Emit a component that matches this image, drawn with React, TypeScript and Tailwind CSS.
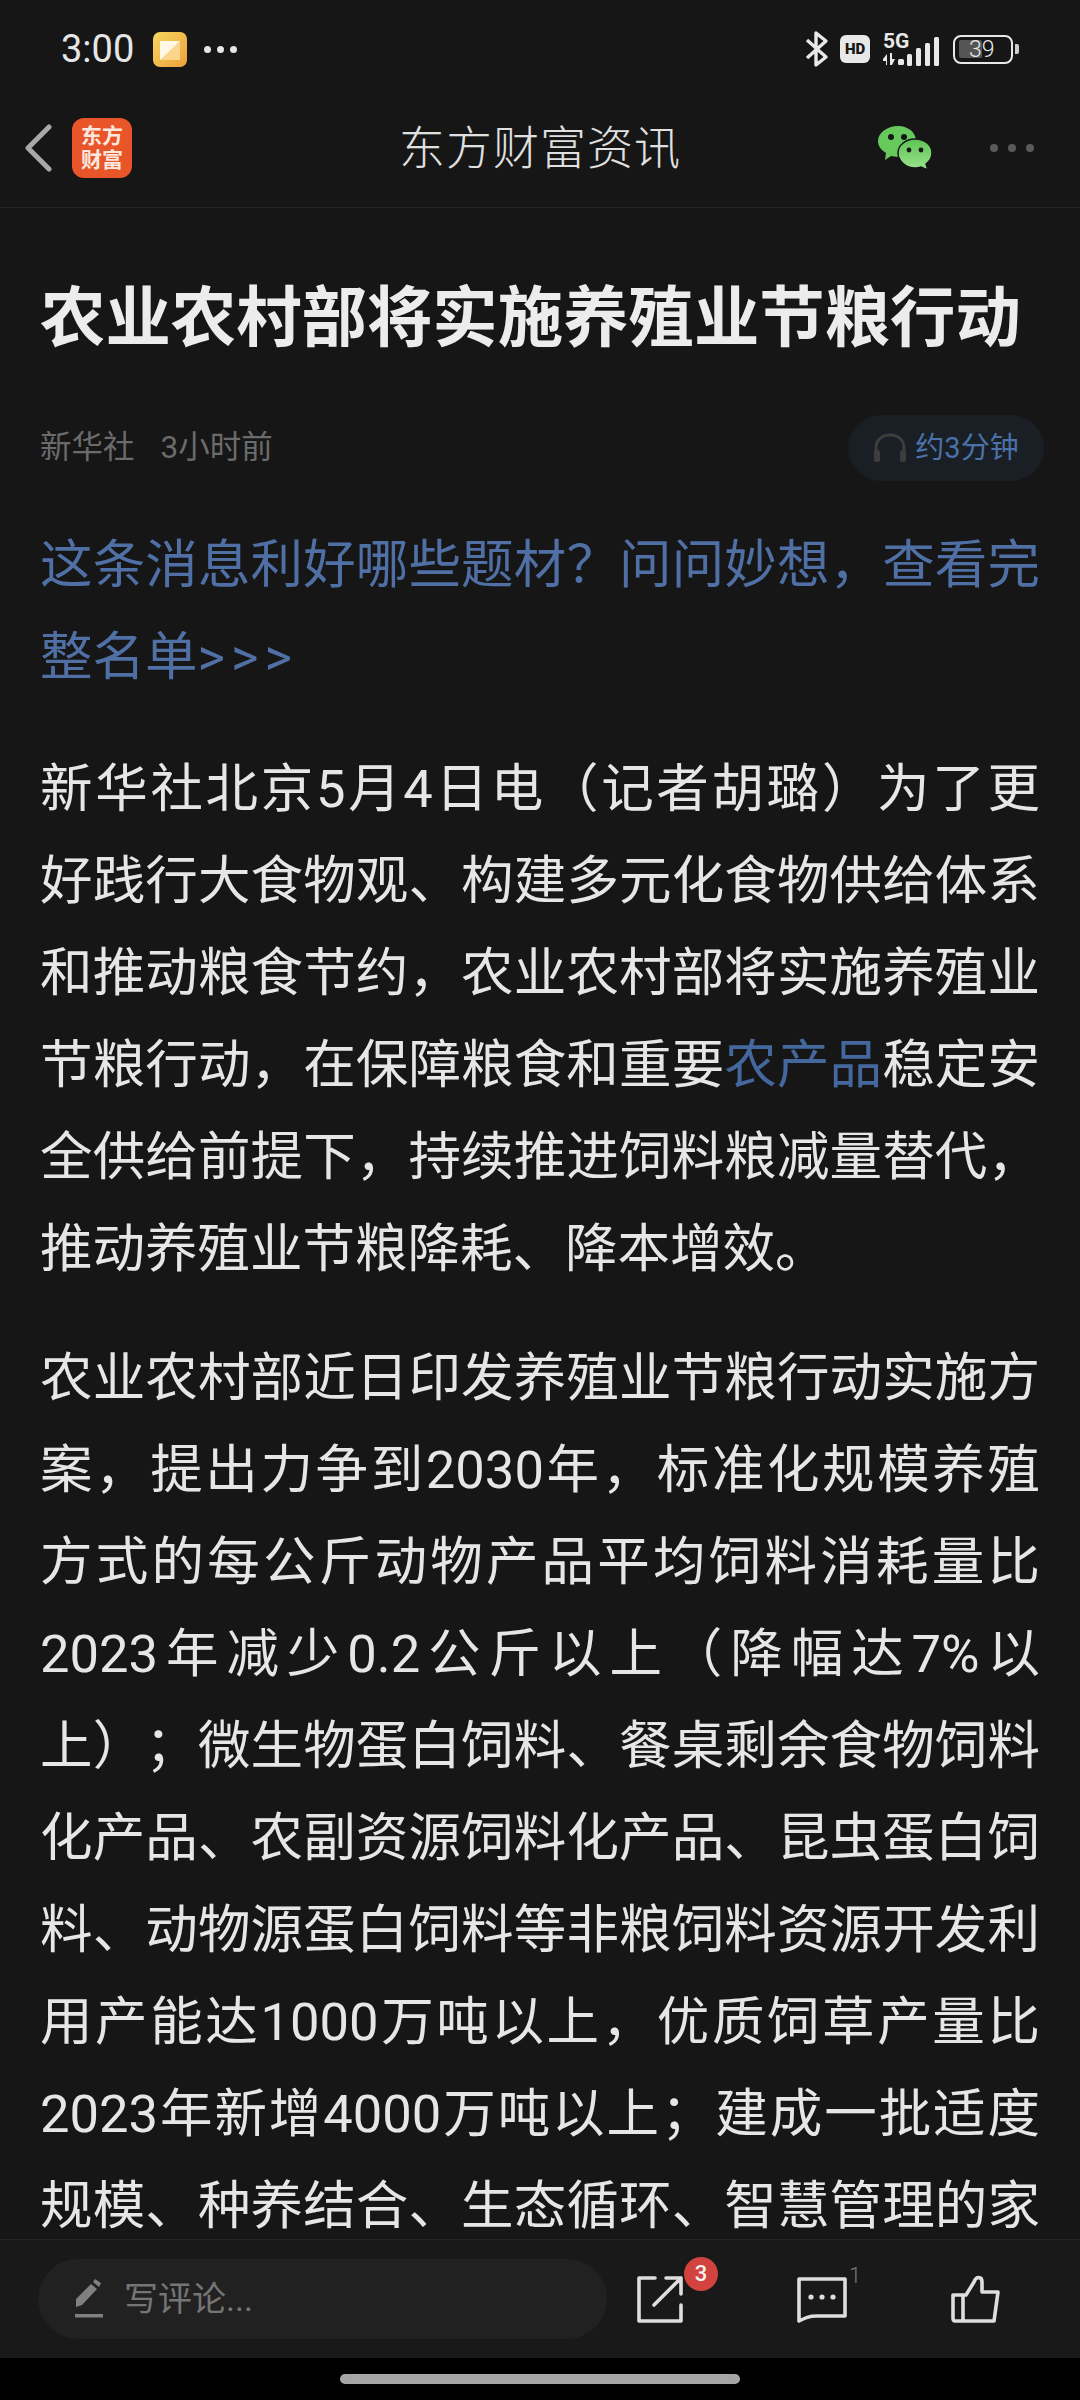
const sans = 'font-["Roboto","Noto_Sans_CJK_SC",sans-serif]'

const paragraphOne = [
    ['新华社北京5月4日电（记者胡璐）为了更'],
    ['好践行大食物观、构建多元化食物供给体系'],
    ['和推动粮食节约，农业农村部将实施养殖业'],
    ['节粮行动，在保障粮食和重要', '农产品', '稳定安'],
    ['全供给前提下，持续推进饲料粮减量替代，'],
]

const paragraphTwo = [
    '农业农村部近日印发养殖业节粮行动实施方',
    '案，提出力争到2030年，标准化规模养殖',
    '方式的每公斤动物产品平均饲料消耗量比',
    '2023年减少0.2公斤以上（降幅达7%以',
    '上）；微生物蛋白饲料、餐桌剩余食物饲料',
    '化产品、农副资源饲料化产品、昆虫蛋白饲',
    '料、动物源蛋白饲料等非粮饲料资源开发利',
    '用产能达1000万吨以上，优质饲草产量比',
    '2023年新增4000万吨以上；建成一批适度',
    '规模、种养结合、生态循环、智慧管理的家',
]

function StatusIcons() {
    return (
        <div className="flex items-center">
            <svg width="24" height="38" viewBox="0 0 24 38" fill="none" stroke="#e8e8e8" strokeWidth="3.4" strokeLinejoin="round">
                <path d="M2 10 L21 27 L11 35 V3 L21 11 L2 28" />
            </svg>
            <div className="ml-[11px] flex h-[28px] w-[30px] items-center justify-center rounded-[6px] bg-[#e8e8e8] text-[15px] leading-none font-black text-[#161616]">
                HD
            </div>
            <div className="relative ml-[12px] h-[34px] w-[57px]">
                <span className="absolute top-0 left-[1px] text-[21px] leading-[19px] font-bold text-[#e8e8e8]">5G</span>
                <svg width="57" height="34" viewBox="0 0 57 34" fill="#e8e8e8" className="block">
                    <path d="M1 27 L5 22 V33 H4 V29 H1 Z M8 21 H10 V27 H13 L10 33 H8 Z" />
                    <rect x="16" y="27" width="6" height="6" rx="1.5" />
                    <rect x="25" y="22" width="5" height="12" rx="1.5" />
                    <rect x="34" y="16" width="5" height="18" rx="1.5" />
                    <rect x="43" y="11" width="5" height="23" rx="1.5" />
                    <rect x="52" y="5" width="5" height="29" rx="1.5" />
                </svg>
            </div>
            <div className="ml-[14px] flex items-center gap-[2px]">
                <div className="relative flex h-[29px] w-[60px] items-center rounded-[8px] border-[2.5px] border-[#e8e8e8] px-[4px]">
                    <div className="h-[18px] w-[23px] rounded-[2px] bg-[#555555]" />
                    <span className="absolute left-[14px] text-[23px] leading-none font-light text-[#e8e8e8]">39</span>
                </div>
                <div className="h-[10px] w-[4px] rounded-r-[2px] bg-[#cccccc]" />
            </div>
        </div>
    )
}

function WeChatIcon() {
    return (
        <svg width="54" height="44" viewBox="0 0 54 44">
            <defs>
                <linearGradient id="wc" x1="0" y1="0" x2="0" y2="1">
                    <stop offset="0" stopColor="#5cc354" />
                    <stop offset="1" stopColor="#9be38c" />
                </linearGradient>
            </defs>
            <path d="M20 0 C31 0 38 7 38 15 C38 24 30 31 20 31 C17 31 15 30 13 30 L7 34 L8 27 C3 24 0 20 0 15 C0 7 9 0 20 0 Z" fill="#67c95c" />
            <path d="M37 13 C47 13 54 19 54 27 C54 32 52 35 48 38 L50 44 L43 41 C41 42 39 42 37 42 C28 42 20 35 20 27 C20 19 28 13 37 13 Z" fill="url(#wc)" stroke="#161616" strokeWidth="1.5" />
            <circle cx="13" cy="11" r="3" fill="#161616" />
            <circle cx="26" cy="11" r="3" fill="#161616" />
            <circle cx="31" cy="24" r="2.4" fill="#161616" />
            <circle cx="43" cy="24" r="2.4" fill="#161616" />
        </svg>
    )
}

function TextLine({ children, last }: { children: React.ReactNode; last?: boolean }) {
    return (
        <div
            className={
                last
                    ? 'h-[92px] whitespace-nowrap [text-spacing-trim:space-all]'
                    : 'h-[92px] whitespace-nowrap text-justify [text-align-last:justify] [text-spacing-trim:space-all]'
            }
        >
            {children}
        </div>
    )
}

export default function App() {
    return (
        <div className={`flex h-[2400px] w-[1080px] flex-col overflow-hidden bg-[#161616] ${sans}`}>
            {/* Status bar */}
            <div className="flex h-[98px] shrink-0 items-center justify-between pr-[61px] pl-[61px]">
                <div className="flex items-center">
                    <span className="text-[38px] leading-none text-[#e6e6e6]">3:00</span>
                    <svg width="34" height="35" viewBox="0 0 34 35" className="ml-[19px]">
                        <defs>
                            <linearGradient id="note" x1="0" y1="0" x2="1" y2="1">
                                <stop offset="0" stopColor="#f5d75f" />
                                <stop offset="1" stopColor="#eda03c" />
                            </linearGradient>
                        </defs>
                        <rect width="34" height="35" rx="7" fill="url(#note)" />
                        <rect x="7" y="9" width="20" height="19" fill="#f9d68c" />
                        <path d="M7 9 H27 L7 28 Z" fill="#fff9e3" />
                    </svg>
                    <div className="ml-[17px] flex gap-[6px]">
                        <div className="h-[7px] w-[7px] rounded-full bg-[#e6e6e6]" />
                        <div className="h-[7px] w-[7px] rounded-full bg-[#e6e6e6]" />
                        <div className="h-[7px] w-[7px] rounded-full bg-[#e6e6e6]" />
                    </div>
                </div>
                <StatusIcons />
            </div>

            {/* Nav */}
            <div className="grid h-[110px] shrink-0 grid-cols-[1fr_auto_1fr] items-center border-b border-[#262626] pb-[10px]">
                <div className="flex items-center pl-[24px]">
                    <svg width="28" height="48" viewBox="0 0 28 48" fill="none" stroke="#a8a8a8" strokeWidth="5" strokeLinecap="round" strokeLinejoin="round">
                        <path d="M25 3 L4 24 L25 45" />
                    </svg>
                    <div className="ml-[20px] flex h-[60px] w-[60px] flex-col items-center justify-center rounded-[12px] bg-[#e85528] font-['Liberation_Serif','Noto_Sans_CJK_SC',serif] text-[21px] leading-[24px] font-bold text-[#fbe9e0]">
                        <span>东方</span>
                        <span>财富</span>
                    </div>
                </div>
                <div className="text-[46px] leading-none font-light tracking-[1px] text-[#e0e0e0]">东方财富资讯</div>
                <div className="flex items-center justify-end pr-[46px]">
                    <WeChatIcon />
                    <div className="ml-[58px] flex gap-[10px]">
                        <div className="h-[8px] w-[8px] rounded-full bg-[#5a5a5a]" />
                        <div className="h-[8px] w-[8px] rounded-full bg-[#5a5a5a]" />
                        <div className="h-[8px] w-[8px] rounded-full bg-[#5a5a5a]" />
                    </div>
                </div>
            </div>

            {/* Article */}
            <div className="min-h-0 flex-1 overflow-hidden px-[40px]">
                <h1 className="mt-[73px] text-[65.4px] leading-[76px] font-bold whitespace-nowrap text-[#ececec]">
                    农业农村部将实施养殖业节粮行动
                </h1>

                <div className="mt-[58px] flex h-[66px] items-center justify-between">
                    <div className="text-[31.5px] leading-none text-[#6b6b6b]">
                        <span>新华社</span>
                        <span className="ml-[26px]">3小时前</span>
                    </div>
                    <div className="-mr-[4px] flex h-[66px] w-[196px] items-center justify-center gap-[8px] rounded-[33px] bg-[#1a1f26]">
                        <svg width="34" height="30" viewBox="0 0 34 30" fill="none" stroke="#3d3d3d" strokeWidth="3">
                            <path d="M3 26 V15 C3 7 9 2 17 2 C25 2 31 7 31 15 V26" />
                            <rect x="1" y="17" width="6" height="12" rx="2.5" fill="#3d3d3d" stroke="none" />
                            <rect x="27" y="17" width="6" height="12" rx="2.5" fill="#3d3d3d" stroke="none" />
                        </svg>
                        <span className="text-[29px] leading-none text-[#4a72a8]">约3分钟</span>
                    </div>
                </div>

                <div className="mt-[38px] text-[52.5px] leading-[92px] text-[#4f6fa5]">
                    <TextLine>这条消息利好哪些题材？问问妙想，查看完</TextLine>
                    <TextLine last>
                        整名单<span className="tracking-[6px]">&gt;&gt;&gt;</span>
                    </TextLine>
                </div>

                <div className="mt-[40px] text-[52.5px] leading-[92px] text-[#e6e6e6]">
                    {paragraphOne.map((parts, i) => (
                        <TextLine key={i}>
                            {parts.length === 3 ? (
                                <>
                                    {parts[0]}
                                    <span className="text-[#44689e]">{parts[1]}</span>
                                    {parts[2]}
                                </>
                            ) : (
                                parts[0]
                            )}
                        </TextLine>
                    ))}
                    <TextLine last>推动养殖业节粮降耗、降本增效。</TextLine>
                </div>

                <div className="mt-[37px] text-[52.5px] leading-[92px] text-[#e6e6e6]">
                    {paragraphTwo.map((line) => (
                        <TextLine key={line}>{line}</TextLine>
                    ))}
                </div>
            </div>

            {/* Bottom toolbar */}
            <div className="flex h-[119px] shrink-0 items-center border-t border-[#262626] bg-[#191919] pl-[38px]">
                <div className="flex h-[80px] w-[569px] items-center rounded-full bg-[#212121] pl-[36px]">
                    <svg width="30" height="40" viewBox="0 0 30 40" fill="#808080">
                        <path d="M2 28 V20 L17 5 L23 10 L8 26 Z M19 3 L21 0 L27 4 L25 8 Z" />
                        <rect x="1" y="35" width="28" height="3.5" />
                    </svg>
                    <span className="ml-[20px] text-[34px] leading-none text-[#757575]">写评论...</span>
                </div>

                <div className="relative ml-[29px]">
                    <svg width="48" height="48" viewBox="0 0 48 48" fill="none" stroke="#dedede" strokeWidth="3.6" strokeLinecap="round" strokeLinejoin="round" className="block">
                        <path d="M19 3 H3 V46 H45 V30" />
                        <path d="M18 30 L45 3 M30 3 H45 V19" />
                    </svg>
                    <div className="absolute -top-[18px] left-[48px] flex h-[34px] w-[34px] items-center justify-center rounded-full bg-[#d2433f] text-[22px] leading-none font-medium text-[#f4f4f4]">
                        3
                    </div>
                </div>

                <div className="relative ml-[113px]">
                    <svg width="50" height="48" viewBox="0 0 50 48" fill="none" stroke="#dedede" strokeWidth="3.6" strokeLinejoin="round" className="block">
                        <path d="M2 4 H48 V41 H20 C12 41 8 43 2 46 Z" />
                        <circle cx="14" cy="22" r="2.6" fill="#dedede" stroke="none" />
                        <circle cx="25" cy="22" r="2.6" fill="#dedede" stroke="none" />
                        <circle cx="36" cy="22" r="2.6" fill="#dedede" stroke="none" />
                    </svg>
                    <span className="absolute -top-[10px] left-[52px] text-[22px] leading-none font-light text-[#757575]">1</span>
                </div>

                <svg width="50" height="50" viewBox="0 0 50 50" fill="none" stroke="#dedede" strokeWidth="3.6" strokeLinejoin="round" className="ml-[104px]">
                    <path d="M2 21 H15 L23 8 C25 2 31 2 31 8 V18 H47 L43 47 H4 C2 47 2 46 2 44 Z" />
                    <path d="M12 21 V47" />
                </svg>
            </div>

            {/* Gesture area */}
            <div className="flex h-[42px] shrink-0 justify-center bg-black pt-[16px]">
                <div className="h-[10px] w-[400px] rounded-full bg-[#a5a5a5]" />
            </div>
        </div>
    )
}
